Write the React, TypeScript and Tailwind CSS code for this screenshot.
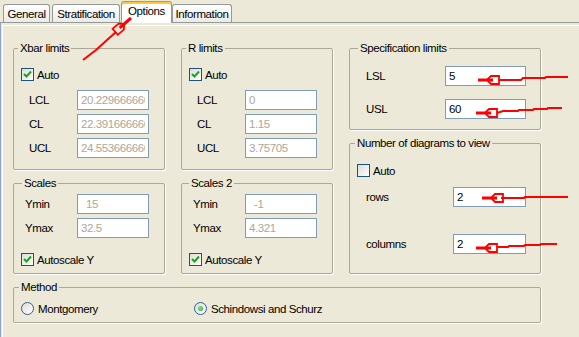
import type { ReactNode } from 'react';

function Check({ checked }: { checked?: boolean }) {
  return (
    <span className="w-[13px] h-[13px] shrink-0 border border-[#1c5180] bg-gradient-to-br from-[#dcdcd7] to-white flex items-center justify-center">
      {checked && (
        <svg width="11" height="11" viewBox="0 0 11 11">
          <path d="M2 5 L4.5 7.5 L9 2.5" stroke="#21a121" strokeWidth="2" fill="none" />
        </svg>
      )}
    </span>
  );
}

function Radio({ checked }: { checked?: boolean }) {
  return (
    <span className="w-[13px] h-[13px] shrink-0 rounded-full border border-[#2f5f94] bg-gradient-to-br from-[#dcdcd7] to-white flex items-center justify-center">
      {checked && <span className="w-[5px] h-[5px] rounded-full bg-[radial-gradient(circle_at_40%_40%,#8ee28e,#21a121)]" />}
    </span>
  );
}

function Field({ value, className }: { value: string; className: string }) {
  return (
    <input
      readOnly
      value={value}
      className={`h-[20px] border border-[#7f9db9] bg-white outline-none leading-[14px] ${className}`}
    />
  );
}

function Row({ label, labelClass, children }: { label: string; labelClass: string; children: ReactNode }) {
  return (
    <div className="flex items-center h-[20px]">
      <span className={`shrink-0 font-normal ${labelClass}`}>{label}</span>
      {children}
    </div>
  );
}

function Group({ title, className, legendClass, children }: { title: string; className: string; legendClass: string; children: ReactNode }) {
  return (
    <fieldset className={`border border-[#aca899] rounded-[2px] shadow-[1px_1px_0_#fff] p-0 m-0 min-w-0 ${className}`}>
      <legend className={`px-[2px] leading-[14px] ${legendClass}`}>{title}</legend>
      {children}
    </fieldset>
  );
}

function LimitsBox({ title, values }: { title: string; values: string[] }) {
  const labels = ['LCL', 'CL', 'UCL'];
  return (
    <Group title={title} className="h-[129px]" legendClass="ml-[4px]">
      <div className="mt-[13px] pl-[7px] flex items-start gap-[3px] h-[14px]">
        <Check checked />
        <span>Auto</span>
      </div>
      <div className="mt-[8px] flex flex-col gap-[4px]">
        {labels.map((l, i) => (
          <Row key={l} label={l} labelClass="w-[63px] pl-[15px]">
            <Field value={values[i]} className="w-[72px] px-[3px] text-[#aca899]" />
          </Row>
        ))}
      </div>
    </Group>
  );
}

function ScalesBox({ title, legendClass, ymin, ymax }: { title: string; legendClass: string; ymin: string; ymax: string }) {
  return (
    <Group title={title} className="h-[98px]" legendClass={legendClass}>
      <div className="mt-[4px] flex flex-col gap-[4px]">
        <Row label="Ymin" labelClass="w-[63px] pl-[11px]">
          <Field value={ymin} className="w-[72px] pl-[8px] pr-[3px] text-[#aca899]" />
        </Row>
        <Row label="Ymax" labelClass="w-[63px] pl-[11px]">
          <Field value={ymax} className="w-[72px] px-[3px] text-[#aca899]" />
        </Row>
      </div>
      <div className="mt-[15px] pl-[7px] flex items-start gap-[3px] h-[14px]">
        <Check checked />
        <span>Autoscale Y</span>
      </div>
    </Group>
  );
}

// hand drawn red arrow head, tip at (x,y), shaft going along angle deg
function Head({ x, y, deg }: { x: number; y: number; deg: number }) {
  return (
    <g transform={`translate(${x} ${y}) rotate(${deg})`}>
      <path d="M0 0 H15" stroke="#ff0000" strokeWidth="3" />
      <path d="M9 0 L13 -4 H21 V4 H13 Z" stroke="#ff0000" strokeWidth="1.8" fill="none" />
    </g>
  );
}

function Arrows() {
  return (
    <svg className="absolute inset-0 pointer-events-none z-20" width="579" height="337" viewBox="0 0 579 337">
      <g stroke="#ff0000" strokeWidth="2" fill="none">
        <polyline points="83,60 96,50 107,40 116,32" />
        <polyline points="499,80 521,80 523,78 545,78 546,77 568,77" />
        <polyline points="497,113 503,111 518,111 519,110 533,110 534,109 547,109 548,108 562,108" />
        <polyline points="501,198 524,198 525,197 568,197" />
        <polyline points="497,247 508,247 509,246 524,246 525,245 540,245 541,244 557,244" />
      </g>
      <Head x={131} y={18} deg={138.8} />
      <Head x={478} y={80} deg={0} />
      <Head x={476} y={113} deg={0} />
      <Head x={482} y={198} deg={0} />
      <Head x={476} y={248} deg={0} />
    </svg>
  );
}

export default function App() {
  const tab = 'h-[18px] border border-b-0 border-[#919b9c] rounded-t-[3px] bg-gradient-to-b from-white to-[#ecebe6] flex items-center justify-center';
  return (
    <div className="relative w-[579px] h-[337px] overflow-hidden bg-[#ece9d8] text-black text-[11.5px] leading-[14px] tracking-[-0.4px] font-['Liberation_Sans',Arial,sans-serif]">
      <div className="relative z-10 h-[22px] flex items-end pl-[3px]">
        <div className={`${tab} w-[47px]`}>General</div>
        <div className={`${tab} w-[68px] ml-[2px]`}>Stratification</div>
        <div className="w-[51px] h-[22px] mb-[-1px] ml-[1px] border border-b-0 border-[#919b9c] border-t-[#e68b2c] rounded-t-[3px] bg-white shadow-[inset_0_2px_0_#ffc73c] flex items-center justify-center pb-[3px]">
          Options
        </div>
        <div className={`${tab} w-[60px]`}>Information</div>
      </div>

      <div className="h-[315px] border-t border-l border-[#919b9c] border-l-[#8ea2cc]">
        <div className="ml-[1px] mt-[2px] h-full border-t border-l border-white pl-[10px] pt-[15px]">
          <div className="flex gap-[16px]">
            <div className="w-[320px] grid grid-cols-[152px_152px] gap-x-[16px] gap-y-[6px]">
              <LimitsBox title="Xbar limits" values={['20.2296666666', '22.3916666666', '24.5536666666']} />
              <LimitsBox title="R limits" values={['0', '1.15', '3.75705']} />
              <ScalesBox title="Scales" legendClass="ml-[8px]" ymin="15" ymax="32.5" />
              <ScalesBox title="Scales 2" legendClass="ml-[7px]" ymin="-1" ymax="4.321" />
            </div>

            <div className="w-[192px] flex flex-col gap-[6px]">
              <Group title="Specification limits" className="h-[89px]" legendClass="ml-[8px]">
                <div className="mt-[11px] flex flex-col gap-[13px]">
                  <Row label="LSL" labelClass="w-[95px] pl-[16px]">
                    <Field value="5" className="w-[81px] px-[3px] text-black" />
                  </Row>
                  <Row label="USL" labelClass="w-[95px] pl-[16px]">
                    <Field value="60" className="w-[81px] px-[3px] text-black" />
                  </Row>
                </div>
              </Group>

              <Group title="Number of diagrams to view" className="h-[138px]" legendClass="ml-[5px]">
                <div className="mt-[14px] pl-[7px] flex items-start gap-[3px] h-[14px]">
                  <Check />
                  <span>Auto</span>
                </div>
                <div className="mt-[9px] flex flex-col gap-[27px]">
                  <Row label="rows" labelClass="w-[103px] pl-[16px]">
                    <Field value="2" className="w-[73px] px-[3px] text-black" />
                  </Row>
                  <Row label="columns" labelClass="w-[103px] pl-[16px]">
                    <Field value="2" className="w-[73px] px-[3px] text-black" />
                  </Row>
                </div>
              </Group>
            </div>
          </div>

          <Group title="Method" className="mt-[6px] w-[528px] h-[43px]" legendClass="ml-[5px]">
            <div className="mt-[8px] pl-[7px] flex items-start h-[14px]">
              <div className="w-[173px] flex items-start gap-[4px]">
                <Radio />
                <span>Montgomery</span>
              </div>
              <div className="flex items-start gap-[4px]">
                <Radio checked />
                <span>Schindowsi and Schurz</span>
              </div>
            </div>
          </Group>
        </div>
      </div>

      <Arrows />
    </div>
  );
}
